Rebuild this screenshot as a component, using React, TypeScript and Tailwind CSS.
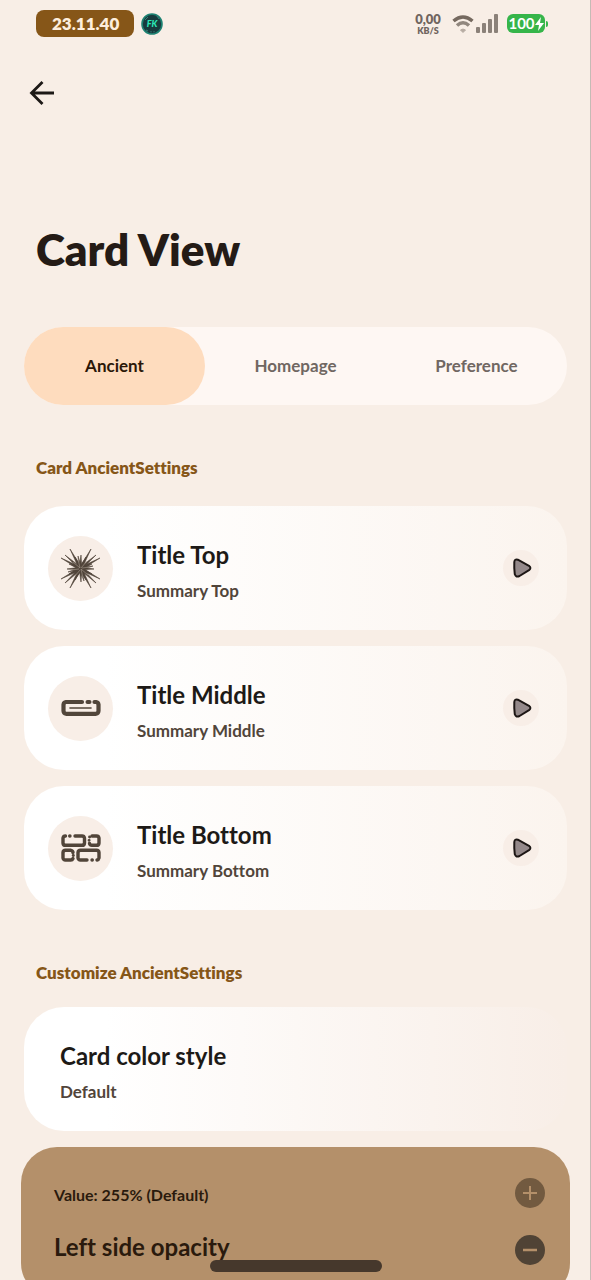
import { useState } from "react";
import type { ReactNode } from "react";

const tabs = ["Ancient", "Homepage", "Preference"];

const burst = [
  [1, 10], [10, 1], [31, 1], [40, 10], [40, 31], [31, 40], [10, 40], [1, 31],
  [5, 7], [36, 7], [36, 35], [5, 35],
  [15, 9], [21, 7], [26, 9], [32, 16], [34, 21], [32, 26], [26, 32], [21, 34],
  [15, 32], [9, 26], [7, 21], [9, 16], [18, 8], [24, 33], [33, 18], [8, 24],
];

function BurstIcon() {
  return (
    <svg viewBox="0 0 41 41" className="size-[41px]" fill="#51453a" aria-hidden="true">
      {burst.map(([x, y]) => {
        const dx = x - 20.5;
        const dy = y - 20.5;
        const len = Math.hypot(dx, dy);
        const px = (-dy / len) * 1.4;
        const py = (dx / len) * 1.4;
        return (
          <path
            key={`${x}-${y}`}
            d={`M${20.5 + px} ${20.5 + py}L${x} ${y}L${20.5 - px} ${20.5 - py}Z`}
            stroke="#51453a"
            strokeWidth="0.6"
          />
        );
      })}
      <g stroke="#b9aca0" strokeWidth="0.5">
        <path d="M20 20L13 14M21 20L27 13M20 22L15 28M21 21L28 27M20 20L18 11M21 21L23 30M19 21L11 22M22 20L30 19" />
      </g>
    </svg>
  );
}

function BarIcon() {
  return (
    <svg viewBox="0 0 40 18" className="h-[18px] w-10" fill="none" stroke="#51453a" strokeLinecap="round" aria-hidden="true">
      <path
        d="M21 3H5A3 3 0 0 0 2.5 5.500V12A3 3 0 0 0 5 14.800H35A3 3 0 0 0 37.500 12V5.500A3 3 0 0 0 35 3H33.500"
        strokeWidth="4.200"
      />
      <path d="M26.500 3H28.500" strokeWidth="4" />
      <path d="M9 9H30" strokeWidth="1.600" />
    </svg>
  );
}

function BlocksIcon() {
  return (
    <svg viewBox="0 0 40 30" className="h-[30px] w-10" fill="none" stroke="#51453a" strokeWidth="3.400" strokeLinecap="round" strokeLinejoin="round" aria-hidden="true">
      <path d="M4.500 3A2.500 2.500 0 0 0 2 5V10A2.500 2.500 0 0 0 4.500 12.300H21A2.500 2.500 0 0 0 23.500 10V5A2.500 2.500 0 0 0 21 3H14M8.700 3H9" />
      <path d="M31 3H35.500A2.500 2.500 0 0 1 38 5V10A2.500 2.500 0 0 1 35.500 12.300H31A2.500 2.500 0 0 1 28.500 10.500" />
      <path d="M28.500 4H28.700M28 7.300H28.200" strokeWidth="2.800" />
      <path d="M12 19.500A2.500 2.500 0 0 0 10 17.300H4.500A2.500 2.500 0 0 0 2 19.500V25A2.500 2.500 0 0 0 4.500 27H9.500A2.500 2.500 0 0 0 12 25.500" />
      <path d="M12.200 22.500H12.400" strokeWidth="2.800" />
      <path d="M26 27H19.500A2.500 2.500 0 0 1 17 25V19.500A2.500 2.500 0 0 1 19.500 17.300H35.500A2.500 2.500 0 0 1 38 19.500V25A2.500 2.500 0 0 1 36 27M31 27H31.300" />
    </svg>
  );
}

function PlayIcon() {
  return (
    <svg viewBox="0 0 20 22" className="ml-[2px] h-[22px] w-5" aria-hidden="true">
      <path
        d="M2.300 5Q2.600 1.600 5.800 2.700L17 8.800Q19.800 11 17 13.200L7.500 19Q4 20.800 2.800 17.300Q2 11 2.300 5Z"
        fill="#94898a"
        stroke="#1c1614"
        strokeWidth="2"
        strokeLinejoin="round"
      />
    </svg>
  );
}

function StatusBar() {
  return (
    <header className="flex h-[47px] items-center pr-[42px] pl-9">
      <time className="flex h-[27px] w-[98px] items-center rounded-lg bg-[#865618] pl-4 text-[17px] font-extrabold text-[#fdeedd]">
        23.11.40
      </time>
      <svg viewBox="0 0 24 24" className="ml-[6px] size-6" role="img" aria-label="FK">
        <circle cx="12" cy="12" r="10" fill="#173b3d" stroke="#1c8272" strokeWidth="1.600" />
        <path d="M5 8l3-3M17 4l2 3M6 18l2 1M11 19v1.500M14 19v1.500" stroke="#397b75" />
        <text x="12" y="15" textAnchor="middle" fontSize="9" fontWeight="900" fontStyle="italic" fill="#2ce6b5">FK</text>
      </svg>
      <div className="ml-auto flex items-center">
        <div className="flex w-7 flex-col items-center font-extrabold text-[#70655f]">
          <span className="text-[13px] leading-[13px]">0,00</span>
          <span className="text-[9px] leading-[9px]">KB/S</span>
        </div>
        <svg viewBox="0 0 22 20" className="ml-[10px] h-5 w-[22px]" fill="none" strokeWidth="3.500" aria-hidden="true">
          <path d="M1.500 7Q11 -1 20.500 7" stroke="#75695f" />
          <path d="M5 11.500Q11 6 17 11.500" stroke="#91877e" />
          <path d="M8.500 16Q11 14 13.500 16L11 18.500Z" fill="#b7aca3" stroke="#b7aca3" strokeWidth="1" />
        </svg>
        <svg viewBox="0 0 23 20" className="ml-[2px] h-5 w-[23px]" fill="#8b8179" aria-hidden="true">
          <rect x="0" y="13" width="4" height="6" rx="1" />
          <rect x="6" y="9" width="4" height="10" rx="1" />
          <rect x="12" y="5" width="4" height="14" rx="1" />
          <rect x="18" y="0" width="4" height="19" rx="1" />
        </svg>
        <div className="ml-2 flex h-[19px] w-[38px] items-center justify-center rounded-md bg-[#36b54a] text-[15px] font-bold text-white">
          <span>100</span>
          <svg viewBox="0 0 9 14" className="h-[14px] w-[9px]" fill="white" aria-hidden="true">
            <path d="M6 0L0 8H4L3 14L9 6H5Z" />
          </svg>
        </div>
        <span className="ml-px h-[6px] w-[2px] rounded-r-full bg-[#36b54a]" />
      </div>
    </header>
  );
}

function CardRow({ icon, title, summary }: { icon: ReactNode; title: string; summary: string }) {
  return (
    <button
      type="button"
      className="flex h-[124px] w-full items-center rounded-[40px] bg-linear-to-r from-white from-15% to-[#fbf4ee] pr-7 pl-6 text-left"
    >
      <span className="flex size-[65px] items-center justify-center rounded-full bg-[#f8eee7]">{icon}</span>
      <span className="ml-6 flex flex-1 flex-col gap-2 pt-[6px]">
        <span className="text-2xl leading-8 font-bold text-[#1d1a17]">{title}</span>
        <span className="text-[17px] leading-6 font-bold text-[#51453a]">{summary}</span>
      </span>
      <span className="flex size-9 items-center justify-center rounded-full bg-[#f8eee7]">
        <PlayIcon />
      </span>
    </button>
  );
}

export default function App() {
  const [active, setActive] = useState("Ancient");
  const [value, setValue] = useState(255);

  return (
    <div className="h-screen overflow-y-auto border-r border-[#c5bbb5] bg-[#f8eee6] font-[Lato,sans-serif] [font-variant-ligatures:none] [scrollbar-width:none]">
      <StatusBar />
      <main className="pr-[23px] pb-8 pl-6">
        <button type="button" aria-label="Back" className="mt-8 block py-px pl-[5px]">
          <svg viewBox="0 0 26 26" className="size-[26px]" fill="none" stroke="#1d1916" strokeWidth="2.800" aria-hidden="true">
            <path d="M25 13H3M13.500 2L2.500 13L13.500 24" />
          </svg>
        </button>
        <h1 className="mt-[110px] pl-3 text-[44px] leading-[64px] font-extrabold text-[#241b16]">Card View</h1>
        <div role="tablist" className="mt-[46px] flex h-[78px] rounded-full bg-[#fef7f3]">
          {tabs.map((tab) => (
            <button
              key={tab}
              type="button"
              role="tab"
              aria-selected={active === tab}
              onClick={() => setActive(tab)}
              className={
                active === tab
                  ? "flex-1 rounded-full bg-[#fedcbe] text-[17px] font-bold text-[#2b1708]"
                  : "flex-1 rounded-full text-[17px] font-bold text-[#706762]"
              }
            >
              {tab}
            </button>
          ))}
        </div>
        <h2 className="mt-[51px] pl-3 text-[17px] leading-6 font-extrabold text-[#865618]">Card AncientSettings</h2>
        <section className="mt-[26px] flex flex-col gap-4">
          <CardRow icon={<BurstIcon />} title="Title Top" summary="Summary Top" />
          <CardRow icon={<BarIcon />} title="Title Middle" summary="Summary Middle" />
          <CardRow icon={<BlocksIcon />} title="Title Bottom" summary="Summary Bottom" />
        </section>
        <h2 className="mt-[51px] pl-3 text-[17px] leading-6 font-extrabold text-[#865618]">Customize AncientSettings</h2>
        <button
          type="button"
          className="mt-[22px] flex h-[124px] w-full flex-col justify-center gap-2 rounded-[40px] bg-linear-to-r from-white from-15% to-[#f8eee7] pt-[6px] pl-9 text-left"
        >
          <span className="text-2xl leading-8 font-bold text-[#1d1a17]">Card color style</span>
          <span className="text-[17px] leading-6 font-bold text-[#51453a]">Default</span>
        </button>
        <section className="-mx-[3px] mt-4 flex h-[152px] justify-between rounded-[36px] bg-[#b4906a] pt-[31px] pr-[25px] pl-[33px] text-[#2a1a0d]">
          <div>
            <p className="mt-[5px] text-base leading-6 font-bold">
              Value: {value}% {value === 255 && "(Default)"}
            </p>
            <h3 className="mt-6 text-2xl leading-8 font-bold">Left side opacity</h3>
          </div>
          <div className="flex flex-col gap-[27px]">
            <button
              type="button"
              aria-label="Increase"
              onClick={() => setValue(Math.min(255, value + 1))}
              className="flex size-[30px] items-center justify-center rounded-full bg-[#725a40]"
            >
              <svg viewBox="0 0 16 16" className="size-4" stroke="#b4906a" strokeWidth="2" aria-hidden="true">
                <path d="M1 8H15M8 1V15" />
              </svg>
            </button>
            <button
              type="button"
              aria-label="Decrease"
              onClick={() => setValue(Math.max(0, value - 1))}
              className="flex size-[30px] items-center justify-center rounded-full bg-[#504335]"
            >
              <svg viewBox="0 0 16 16" className="size-4" stroke="#b4906a" strokeWidth="2.500" aria-hidden="true">
                <path d="M1 8H15" />
              </svg>
            </button>
          </div>
        </section>
      </main>
      <div className="fixed bottom-2 left-1/2 h-3 w-[172px] -translate-x-1/2 rounded-full bg-[#46382c]" />
    </div>
  );
}
